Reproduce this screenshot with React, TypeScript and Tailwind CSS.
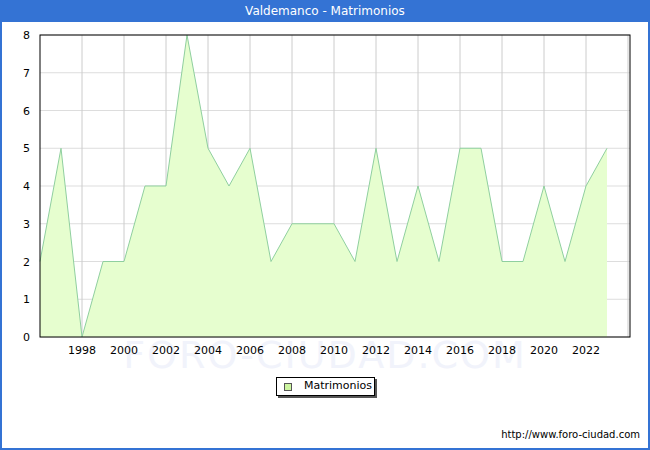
import React from "react";

const data = [2,5,0,2,2,4,4,8,5,4,5,2,3,3,3,2,5,2,4,2,5,5,2,2,4,2,4,5];
const X0 = 40, Y0 = 35, W = 590, H = 302, STEP = 21, YU = H / 8;

export default function App() {
  const px = (i: number) => X0 + i * STEP;
  const py = (v: number) => Y0 + H - v * YU;
  const line = data.map((v, i) => `${px(i)},${py(v)}`).join(" ");
  const area = `${px(0)},${py(0)} ${line} ${px(data.length - 1)},${py(0)}`;
  return (
    <div className="w-[650px] h-[450px] bg-[#3473d4] p-[2px] pt-0 flex flex-col" style={{ fontFamily: "'DejaVu Sans', sans-serif" }}>
      <div className="h-[22px] flex items-center justify-center text-white text-[12px]">Valdemanco - Matrimonios</div>
      <div className="flex-1 bg-white relative">
        <svg width="646" height="426" className="absolute left-0 top-0" style={{ fontFamily: "'DejaVu Sans', sans-serif" }}>
          <text x="323" y="346" textAnchor="middle" fontSize="38" fill="#f1f3fb" letterSpacing="2">FORO-CIUDAD.COM</text>
          {Array.from({ length: 9 }, (_, k) => (
            <g key={k}>
              <line x1={X0 - 2} x2={X0 + W - 2} y1={py(k) - 22} y2={py(k) - 22} stroke="#dddddd" />
              <text x={X0 - 12} y={py(k) - 22 + 4} textAnchor="end" fontSize="11" fill="#000">{k}</text>
            </g>
          ))}
          {Array.from({ length: 14 }, (_, k) => (
            <g key={k}>
              <line x1={px(2 + 2 * k) - 2} x2={px(2 + 2 * k) - 2} y1={Y0 - 22} y2={Y0 + H - 22} stroke="#cccccc" />
              {k < 13 && <text x={px(2 + 2 * k) - 2} y={Y0 + H - 22 + 17} textAnchor="middle" fontSize="11">{1998 + 2 * k}</text>}
            </g>
          ))}
          <g transform="translate(-2,-22)">
            <polygon points={area} fill="#e6fecf" />
            <polyline points={line} fill="none" stroke="#8fcf9f" strokeWidth="1" />
            <rect x={X0} y={Y0} width={W} height={H} fill="none" stroke="#000" />
          </g>
        </svg>
        <div className="absolute left-[274px] top-[355px] w-[99px] h-[19px] bg-white border border-black shadow-[2px_2px_0_#555] flex items-center text-[11px]">
          <span className="w-[8px] h-[8px] border border-[#555] bg-[#ccf5a0] ml-[7px] mr-[12px]" />
          Matrimonios
        </div>
        <div className="absolute right-[8px] top-[405px] text-[10px]">http://www.foro-ciudad.com</div>
      </div>
    </div>
  );
}
